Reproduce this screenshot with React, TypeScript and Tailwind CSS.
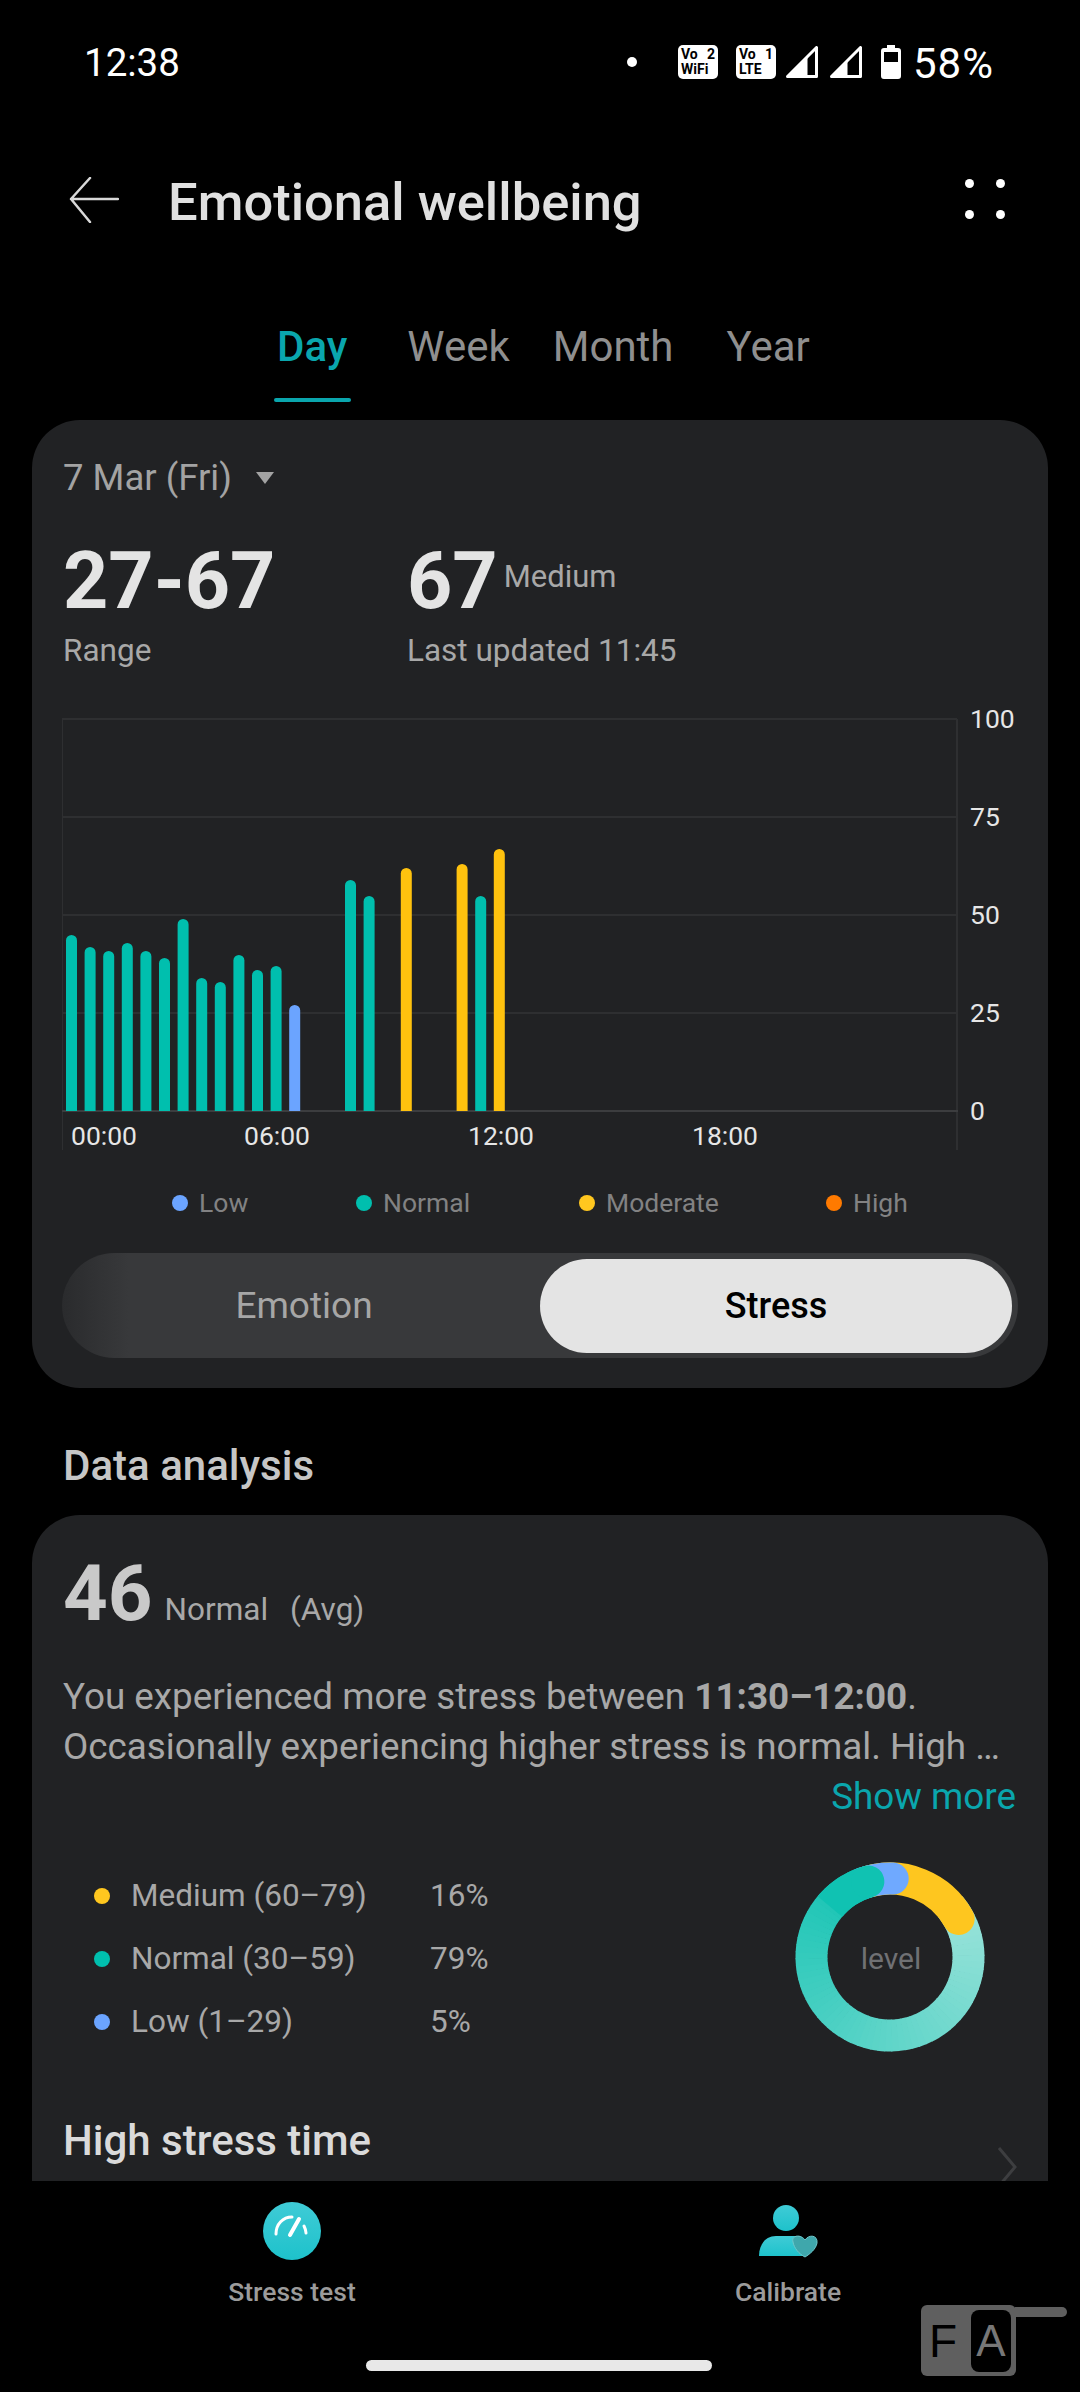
const bars = [
  [0, 176, "#00bfae"], [1, 164, "#00bfae"], [2, 160, "#00bfae"], [3, 168, "#00bfae"], [4, 160, "#00bfae"],
  [5, 153, "#00bfae"], [6, 192, "#00bfae"], [7, 133, "#00bfae"], [8, 129, "#00bfae"], [9, 156, "#00bfae"],
  [10, 141, "#00bfae"], [11, 145, "#00bfae"], [12, 106, "#6ba4ff"], [15, 231, "#00bfae"], [16, 215, "#00bfae"],
  [18, 243, "#ffc20e"], [21, 247, "#ffc20e"], [22, 215, "#00bfae"], [23, 262, "#ffc20e"],
] as const;

const legend = [
  { label: "Low", dot: "bg-[#6ba4ff]", w: "w-[184px]" },
  { label: "Normal", dot: "bg-[#00bfae]", w: "w-[223px]" },
  { label: "Moderate", dot: "bg-[#ffc71f]", w: "w-[247px]" },
  { label: "High", dot: "bg-[#ff7a00]", w: "w-[120px]" },
];

const levels = [
  { label: "Medium (60–79)", pct: "16%", dot: "bg-[#ffc71f]" },
  { label: "Normal (30–59)", pct: "79%", dot: "bg-[#00bfae]" },
  { label: "Low (1–29)", pct: "5%", dot: "bg-[#6ba4ff]" },
];

function StatusBadge({ top, num, bottom }: { top: string; num: string; bottom: string }) {
  return (
    <div className="w-10 h-[34px] bg-white rounded-[5px] text-black px-[3px] pt-[2px] font-['Roboto',sans-serif] font-bold text-[14px] leading-[15px]">
      <div className="flex justify-between">
        <span>{top}</span>
        <span>{num}</span>
      </div>
      <div>{bottom}</div>
    </div>
  );
}

function Signal({ level }: { level: number }) {
  return (
    <svg width="32" height="32" viewBox="0 0 32 32">
      <path d="M30.5 1.5V30.5H1.5Z" fill="none" stroke="#fff" strokeWidth="3" strokeLinejoin="round" />
      <path d={`M${level} ${31 - level}L${level} 31H1Z`} fill="#fff" stroke="#fff" strokeWidth="1" strokeLinejoin="round" />
    </svg>
  );
}

function polar(r: number, deg: number) {
  const a = ((deg - 90) * Math.PI) / 180;
  return [100 + r * Math.cos(a), 100 + r * Math.sin(a)];
}

function arc(from: number, to: number) {
  const [x1, y1] = polar(78.5, from);
  const [x2, y2] = polar(78.5, to);
  return `M${x1} ${y1}A78.5 78.5 0 ${to - from > 180 ? 1 : 0} 1 ${x2} ${y2}`;
}

function Donut() {
  const steps = 70;
  const start = [0x9b, 0xe3, 0xda];
  const end = [0x10, 0xc2, 0xb2];
  return (
    <svg width="200" height="200" viewBox="0 0 200 200">
      {Array.from({ length: steps }).map((_, i) => {
        const t = i / (steps - 1);
        const c = start.map((s, k) => Math.round(s + (end[k] - s) * t));
        const from = 50 + (i * 300) / steps;
        return (
          <path
            key={i}
            d={arc(from, from + 300 / steps + 0.6)}
            fill="none"
            strokeWidth="32"
            stroke={`rgb(${c[0]},${c[1]},${c[2]})`}
          />
        );
      })}
      <path d={arc(-16, 61)} fill="none" stroke="#fec61f" strokeWidth="32" strokeLinecap="round" />
      <path d={arc(-20, 2)} fill="none" stroke="#6fa9ff" strokeWidth="32" strokeLinecap="round" />
      <path d={arc(-50, -16)} fill="none" stroke="#10c2b2" strokeWidth="32" />
      <path d={arc(-17, -16)} fill="none" stroke="#10c2b2" strokeWidth="32" strokeLinecap="round" />
      <text x="101" y="112" textAnchor="middle" fontSize="30" fill="#707174" fontFamily="Roboto, sans-serif">level</text>
    </svg>
  );
}

function Chart() {
  return (
    <svg width="986" height="470" viewBox="62 700 986 470" className="block">
      <path d="M62 719H957M62 817H957M62 915H957M62 1013H957" stroke="#2e2f31" strokeWidth="2" />
      <path d="M62 719V1150M957 719V1150" stroke="#2e2f31" strokeWidth="2" />
      <path d="M62 1111H958" stroke="#3c3d3f" strokeWidth="2" />
      {bars.map(([i, h, color]) => {
        const x = 66 + i * 18.6;
        const top = 1111 - h;
        return (
          <path
            key={i}
            d={`M${x} 1111V${top + 5.5}A5.5 5.5 0 0 1 ${x + 11} ${top + 5.5}V1111Z`}
            fill={color}
          />
        );
      })}
      <g fill="#e6e6e6" fontSize="26.5" fontFamily="Roboto, sans-serif">
        <text x="970" y="728">100</text>
        <text x="970" y="826">75</text>
        <text x="970" y="924">50</text>
        <text x="970" y="1022">25</text>
        <text x="970" y="1120">0</text>
        <text x="71" y="1145">00:00</text>
        <text x="244" y="1145">06:00</text>
        <text x="468" y="1145">12:00</text>
        <text x="692" y="1145">18:00</text>
      </g>
    </svg>
  );
}

export default function App() {
  return (
    <div className="relative h-[2392px] w-[1080px] bg-black overflow-hidden flex flex-col font-['Roboto',sans-serif]">
      {/* status bar */}
      <div className="h-[124px] flex items-center pl-[84px] pr-[86px] text-white">
        <span className="text-[38.5px] leading-none mt-[2px]">12:38</span>
        <div className="ml-auto flex items-center">
          <div className="w-[10px] h-[10px] rounded-full bg-white mr-[41px]" />
          <StatusBadge top="Vo" num="2" bottom="WiFi" />
          <div className="w-[18px]" />
          <StatusBadge top="Vo" num="1" bottom="LTE" />
          <div className="w-[10px]" />
          <Signal level={21} />
          <div className="w-3" />
          <Signal level={17} />
          <div className="w-[19px]" />
          <svg width="20" height="34" viewBox="0 0 20 34">
            <path d="M6 0H14V3H17Q20 3 20 6V31Q20 34 17 34H3Q0 34 0 31V6Q0 3 3 3H6Z" fill="#fff" />
            <rect x="3" y="7" width="14" height="10" fill="#000" />
          </svg>
          <span className="text-[42px] leading-none ml-[12px] tracking-[1px] mt-[4px]">58%</span>
        </div>
      </div>

      {/* header */}
      <div className="h-[154px] flex items-start pt-[25px] pl-[69px] pr-[75px]">
        <svg width="50" height="46" viewBox="0 0 50 46" className="mt-[28px]">
          <path d="M21 1L2 22L21 45M2 22H49" fill="none" stroke="#d8d8d8" strokeWidth="2.5" strokeLinecap="round" strokeLinejoin="round" />
        </svg>
        <h1 className="ml-[49px] mt-[23px] text-[52.5px] leading-[60px] font-medium text-[#e0e0e0]">Emotional wellbeing</h1>
        <div className="ml-auto mt-[30px] grid grid-cols-2 gap-x-[22px] gap-y-[22px]">
          <div className="w-[9px] h-[9px] rounded-full bg-white" />
          <div className="w-[9px] h-[9px] rounded-full bg-white" />
          <div className="w-[9px] h-[9px] rounded-full bg-white" />
          <div className="w-[9px] h-[9px] rounded-full bg-white" />
        </div>
      </div>

      {/* tabs */}
      <div className="h-[142px] flex items-start pl-[273px] text-[42px] leading-[50px] text-[#8f8f8f]">
        <div className="flex flex-col items-center">
          <span className="text-[#0aa6ad] font-medium mt-[44px] px-1">Day</span>
          <div className="w-[77px] h-1 rounded-full bg-[#0aa6ad] mt-[26px]" />
        </div>
        <span className="ml-[56px] mt-[44px]">Week</span>
        <span className="ml-[43px] mt-[44px]">Month</span>
        <span className="ml-[53px] mt-[44px]">Year</span>
      </div>

      {/* stress card */}
      <div className="mx-[32px] h-[968px] rounded-[48px] bg-[#212224] flex flex-col">
        <div className="flex items-center pl-[31px] pt-[36px] h-[80px] text-[36.5px] leading-[44px] text-[#a3a3a3]">
          <span>7 Mar (Fri)</span>
          <svg width="20" height="14" viewBox="0 0 20 14" className="ml-[23px]">
            <path d="M1 1H19L10 13Z" fill="#a3a3a3" />
          </svg>
        </div>
        <div className="flex pl-[31px] mt-[37px] h-[132px]">
          <div className="w-[344px]">
            <div className="text-[79px] leading-[88px] font-bold text-[#e4e4e4]">27-67</div>
            <div className="text-[31.5px] leading-[40px] text-[#a8a8a8] mt-[6px]">Range</div>
          </div>
          <div>
            <div className="flex items-baseline">
              <span className="text-[79px] leading-[88px] font-bold text-[#e4e4e4]">67</span>
              <span className="text-[31px] text-[#a8a8a8] ml-[6px] relative -top-[21px]">Medium</span>
            </div>
            <div className="text-[31.5px] leading-[40px] text-[#a8a8a8] mt-[6px]">Last updated 11:45</div>
          </div>
        </div>
        <div className="mt-[31px] ml-[30px]">
          <Chart />
        </div>
        <div className="flex pl-[140px] mt-[16px] h-[34px] items-center text-[26.5px] text-[#828283]">
          {legend.map((l) => (
            <div key={l.label} className={`flex items-center gap-[11px] ${l.w}`}>
              <div className={`w-4 h-4 rounded-full ${l.dot}`} />
              <span>{l.label}</span>
            </div>
          ))}
        </div>
        <div className="mx-[30px] mt-[33px] h-[105px] rounded-full bg-[#38393b] bg-gradient-to-r from-[#2a2b2d] to-[#38393b] to-[7%] flex items-center pr-[6px] text-[37px]">
          <div className="w-[478px] text-center text-[#a6a6a6] pl-[6px]">Emotion</div>
          <div className="w-[472px] h-[94px] rounded-full bg-[#e4e4e4] text-black font-medium text-[36px] flex items-center justify-center">Stress</div>
        </div>
      </div>

      <h2 className="pl-[63px] mt-[54px] h-[73px] text-[42px] leading-[48px] font-medium text-[#c6c6c6]">Data analysis</h2>

      {/* analysis card, cut off by the bottom bar */}
      <div className="mx-[32px] h-[666px] rounded-t-[48px] bg-[#212224] overflow-hidden relative pl-[31px] pr-[32px] shrink-0">
        <div className="flex items-baseline pt-[37px] h-[102px]">
          <span className="text-[78px] leading-[84px] font-bold text-[#c9c9c9]">46</span>
          <span className="text-[31.5px] text-[#a8a8a8] ml-3">Normal</span>
          <span className="text-[31.5px] text-[#a8a8a8] ml-[22px]">(Avg)</span>
        </div>
        <p className="mt-[55px] text-[36.8px] leading-[50px] text-[#a8a8a8] whitespace-nowrap">
          You experienced more stress between <strong className="font-bold">11:30–12:00</strong>.
          <br />
          Occasionally experiencing higher stress is normal. High …
        </p>
        <div className="text-right text-[36.8px] leading-[50px] text-[#0aa6ad]">Show more</div>
        <div className="flex mt-[51px]">
          <div className="pl-[31px] pt-[2px] flex flex-col gap-[21px] w-[433px]">
            {levels.map((l) => (
              <div key={l.label} className="flex items-center h-[42px] text-[31.5px] text-[#a8a8a8]">
                <div className={`w-4 h-4 rounded-full ${l.dot}`} />
                <span className="ml-[21px] w-[299px]">{l.label}</span>
                <span>{l.pct}</span>
              </div>
            ))}
          </div>
          <div className="ml-[294px] -mt-[16px]">
            <Donut />
          </div>
        </div>
        <h3 className="mt-[59px] text-[42px] leading-[50px] font-medium text-[#dadada]">High stress time</h3>
        <svg width="20" height="40" viewBox="0 0 20 40" className="absolute right-[31px] bottom-[-6px]">
          <path d="M2 1L18 20L2 39" fill="none" stroke="#3d3e40" strokeWidth="3" />
        </svg>
      </div>

      {/* bottom actions */}
      <div className="flex pt-[21px] text-[#9b9b9b] text-[26.5px] font-medium">
        <div className="ml-[192px] w-[200px] flex flex-col items-center">
          <svg width="58" height="58" viewBox="0 0 58 58">
            <defs>
              <linearGradient id="gauge" x1="0" y1="0" x2="0" y2="1">
                <stop offset="0" stopColor="#3fcbd6" />
                <stop offset="1" stopColor="#1ec2cb" />
              </linearGradient>
            </defs>
            <circle cx="29" cy="29" r="29" fill="url(#gauge)" />
            <path d="M13 32C13 22 20 15 29 15" fill="none" stroke="#fff" strokeWidth="3" strokeLinecap="round" />
            <path d="M27 33L36 17" fill="none" stroke="#fff" strokeWidth="4" strokeLinecap="round" />
            <path d="M43 31C43 28 42 26 41 24" fill="none" stroke="#fff" strokeWidth="3" strokeLinecap="round" />
          </svg>
          <span className="mt-[14px] leading-[36px]">Stress test</span>
        </div>
        <div className="ml-[296px] w-[200px] flex flex-col items-center">
          <svg width="60" height="58" viewBox="0 0 60 58">
            <defs>
              <linearGradient id="person" x1="0" y1="0" x2="0" y2="1">
                <stop offset="0" stopColor="#3fcbd6" />
                <stop offset="1" stopColor="#1ec2cb" />
              </linearGradient>
            </defs>
            <ellipse cx="28" cy="16" rx="13" ry="13" fill="url(#person)" />
            <path d="M1 54C1 42 8 34 18 34H42C48 38 50 46 48 54Z" fill="url(#person)" />
            <path d="M35 40C33 33 43 32 47 38C51 32 60 33 59 41C58 47 52 52 47 55C41 52 36 46 35 40Z" fill="#3fa7ac" stroke="#6dc8cc" strokeWidth="1" />
          </svg>
          <span className="mt-[14px] leading-[36px]">Calibrate</span>
        </div>
      </div>

      <div className="absolute left-[366px] top-[2360px] w-[346px] h-[11px] rounded-full bg-[#e8e8e8]" />

      {/* floating font-size widget */}
      <div className="absolute left-[921px] top-[2305px] w-[95px] h-[71px] rounded-[6px] bg-[#5f5f5f] flex items-center font-['Liberation_Sans',sans-serif]">
        <span className="ml-[8px] w-[42px] text-[46px] leading-none text-black">F</span>
        <div className="w-[40px] h-[62px] rounded-[8px] bg-black flex items-center justify-center text-[44px] font-thin text-[#777]">A</div>
      </div>
      <div className="absolute left-[1015px] top-[2307px] w-[52px] h-[10px] rounded-r-full bg-[#5f5f5f]" />
    </div>
  );
}
